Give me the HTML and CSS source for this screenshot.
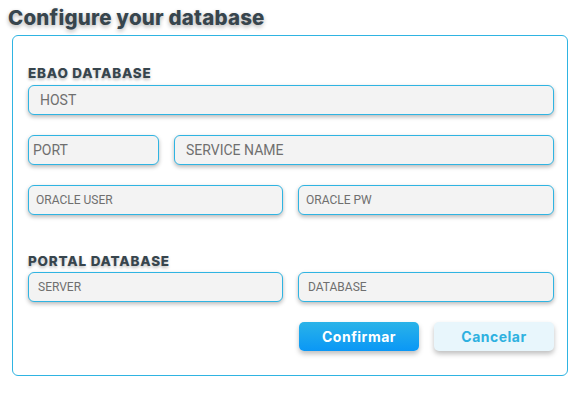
FILE: index.html
```html
<!DOCTYPE html>
<html>
<head>
<meta charset="utf-8">
<link rel="stylesheet" href="styles.css">
</head>
<body>
<h1 class="title">Configure your database</h1>
<div class="card">
  <div class="section-label first">EBAO DATABASE</div>
  <div class="row">
    <input class="field pad-12 big" placeholder="HOST">
  </div>
  <div class="row gap-row port-row">
    <input class="field pad-5 big" placeholder="PORT">
    <input class="field pad-12 big" placeholder="SERVICE NAME">
  </div>
  <div class="row gap-row half-row">
    <input class="field pad-8 small" placeholder="ORACLE USER">
    <input class="field pad-8 small" placeholder="ORACLE PW">
  </div>
  <div class="section-label second">PORTAL DATABASE</div>
  <div class="row half-row">
    <input class="field pad-10 small" placeholder="SERVER">
    <input class="field pad-10 small" placeholder="DATABASE">
  </div>
  <div class="actions">
    <button class="btn btn-primary">Confirmar</button>
    <button class="btn btn-secondary">Cancelar</button>
  </div>
</div>
</body>
</html>
```

FILE: styles.css
```css
html, body {
  margin: 0;
  padding: 0;
  background: #ffffff;
}
body {
  width: 580px;
  height: 400px;
  overflow: hidden;
}
.title {
  margin: 0;
  padding: 5px 0 0 8px;
  height: 30px;
  box-sizing: border-box;
  font-family: Inter, "DejaVu Sans", sans-serif;
  font-weight: 800;
  font-size: 20.5px;
  line-height: 25px;
  color: #37454d;
  letter-spacing: 0.2px;
  text-shadow: 0 2px 4px rgba(0, 0, 0, 0.3);
}
.card {
  margin: 5px 0 0 12px;
  width: 556px;
  height: 341px;
  box-sizing: border-box;
  border: 1px solid #2fb4e2;
  border-radius: 6px;
  padding: 0 13px 0 15px;
}
.section-label {
  font-family: Inter, "DejaVu Sans", sans-serif;
  font-weight: 800;
  font-size: 13.5px;
  line-height: 16px;
  letter-spacing: 0.8px;
  color: #37454d;
  text-shadow: 0 2px 3px rgba(0, 0, 0, 0.25);
}
.section-label.first {
  margin-top: 29px;
  height: 20px;
}
.section-label.second {
  margin-top: 38px;
  height: 19px;
}
.row {
  display: flex;
  gap: 15px;
  height: 30px;
}
.gap-row {
  margin-top: 20px;
}
.port-row .field:first-child {
  width: 131px;
  flex: none;
}
.port-row .field:last-child {
  flex: 1;
}
.half-row .field:first-child {
  flex: none;
  width: 255px;
}
.half-row .field:last-child {
  flex: 1;
}
.field {
  flex: 1;
  min-width: 0;
  height: 30px;
  box-sizing: border-box;
  margin: 0;
  border: 1px solid #2fb4e2;
  border-radius: 6px;
  background: #f3f3f3;
  box-shadow: 0 2px 4px rgba(0, 0, 0, 0.28);
  font-family: Roboto, "Liberation Sans", sans-serif;
  color: #6f6f6f;
  outline: none;
}
.field::placeholder {
  color: #6f6f6f;
  opacity: 1;
}
.big { font-size: 14px; }
.small { font-size: 12px; }
.pad-5 { padding: 0 0 0 4px; }
.pad-8 { padding: 0 0 0 7px; }
.pad-10 { padding: 0 0 0 9px; }
.pad-12 { padding: 0 0 0 11px; }
.actions {
  display: flex;
  justify-content: flex-end;
  gap: 15px;
  margin-top: 20px;
}
.btn {
  width: 120px;
  height: 29px;
  border: none;
  border-radius: 5px;
  font-family: Inter, "DejaVu Sans", sans-serif;
  font-weight: 700;
  font-size: 14px;
  letter-spacing: 0.5px;
  cursor: pointer;
  box-shadow: 0 3px 5px rgba(0, 0, 0, 0.25);
}
.btn-primary {
  background: linear-gradient(#2ab3e8, #0a97f6);
  color: #ffffff;
}
.btn-secondary {
  background: #e8f6fc;
  color: #2eb1e0;
}
```
